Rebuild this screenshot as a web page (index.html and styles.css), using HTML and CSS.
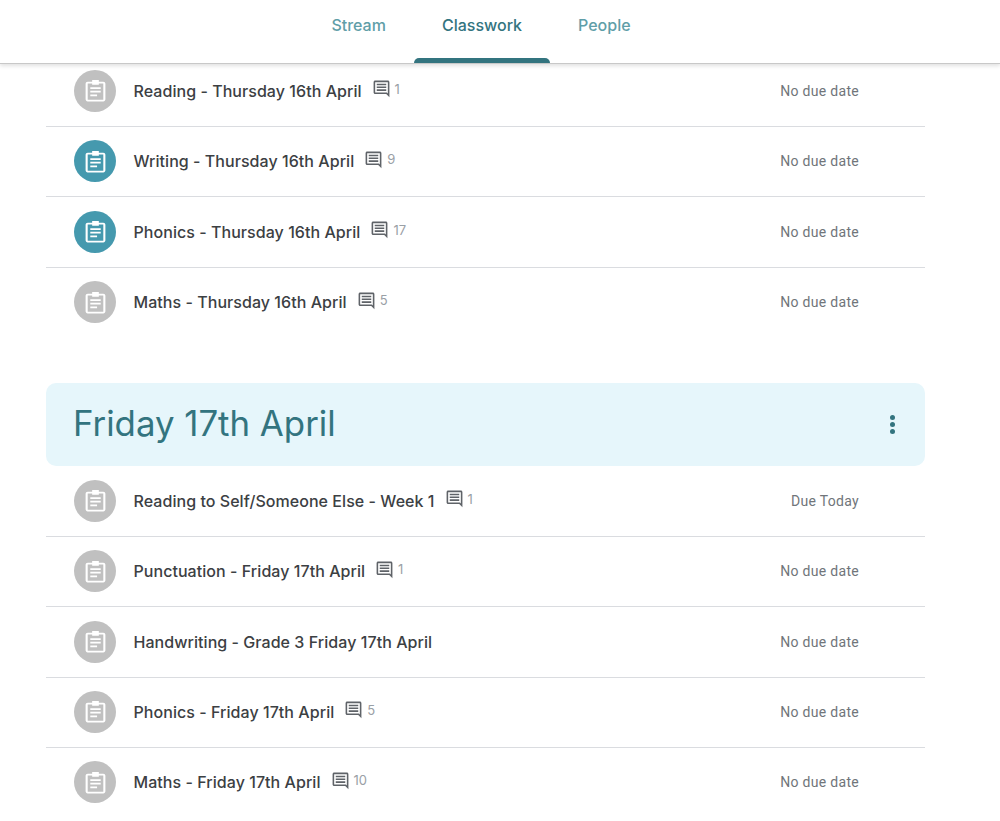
FILE: index.html
```html
<!DOCTYPE html>
<html lang="en">
<head>
  <meta charset="UTF-8">
  <meta name="viewport" content="width=device-width, initial-scale=1.0">
  <title>Classwork</title>
  <link rel="stylesheet" href="styles.css">
</head>
<body>

  <svg class="defs" width="0" height="0">
    <symbol id="assignment" viewBox="0 0 24 24">
      <path fill-rule="evenodd" d="M4.500 3.500h4.300V2h6.400v1.500h4.300c1.100 0 2 .9 2 2V20.500c0 1.100-.9 2-2 2H4.500c-1.100 0-2-.9-2-2V5.500c0-1.100.9-2 2-2zM4.500 5.200V20.800h15V5.200h-4.300V6.500H8.800V5.200zM7 8.800h10v1.700H7zM7 12.300h10v1.700H7zM7 15.800h6.500v1.700H7z"/>
    </symbol>
    <symbol id="comment" viewBox="0 0 24 24">
      <path d="M20 2H4c-1.100 0-2 .9-2 2v13c0 1.100.9 2 2 2h14l4 4V4c0-1.100-.9-2-2-2zm0 16.200L18.800 17H4V4h16v14.200zM6 6h12v2H6zM6 9.500h12v2H6zM6 13h12v2H6z"/>
    </symbol>
  </svg>

  <header class="topbar">
    <nav class="tabs">
      <a class="tab">Stream</a>
      <a class="tab active">Classwork</a>
      <a class="tab">People</a>
    </nav>
  </header>

  <main class="content">
    <ul class="list">
      <li class="row">
        <span class="badge"><svg><use href="#assignment"/></svg></span>
        <span class="title">Reading - Thursday 16th April</span>
        <span class="comments"><svg><use href="#comment"/></svg>1</span>
        <span class="due">No due date</span>
      </li>
      <li class="row">
        <span class="badge teal"><svg><use href="#assignment"/></svg></span>
        <span class="title">Writing - Thursday 16th April</span>
        <span class="comments"><svg><use href="#comment"/></svg>9</span>
        <span class="due">No due date</span>
      </li>
      <li class="row">
        <span class="badge teal"><svg><use href="#assignment"/></svg></span>
        <span class="title">Phonics - Thursday 16th April</span>
        <span class="comments"><svg><use href="#comment"/></svg>17</span>
        <span class="due">No due date</span>
      </li>
      <li class="row">
        <span class="badge"><svg><use href="#assignment"/></svg></span>
        <span class="title">Maths - Thursday 16th April</span>
        <span class="comments"><svg><use href="#comment"/></svg>5</span>
        <span class="due">No due date</span>
      </li>
    </ul>

    <section class="day">
      <h2>Friday 17th April</h2>
      <span class="more"><i></i><i></i><i></i></span>
    </section>

    <ul class="list">
      <li class="row">
        <span class="badge"><svg><use href="#assignment"/></svg></span>
        <span class="title">Reading to Self/Someone Else - Week 1</span>
        <span class="comments"><svg><use href="#comment"/></svg>1</span>
        <span class="due">Due Today</span>
      </li>
      <li class="row">
        <span class="badge"><svg><use href="#assignment"/></svg></span>
        <span class="title">Punctuation - Friday 17th April</span>
        <span class="comments"><svg><use href="#comment"/></svg>1</span>
        <span class="due">No due date</span>
      </li>
      <li class="row">
        <span class="badge"><svg><use href="#assignment"/></svg></span>
        <span class="title">Handwriting - Grade 3 Friday 17th April</span>
        <span class="due">No due date</span>
      </li>
      <li class="row">
        <span class="badge"><svg><use href="#assignment"/></svg></span>
        <span class="title">Phonics - Friday 17th April</span>
        <span class="comments"><svg><use href="#comment"/></svg>5</span>
        <span class="due">No due date</span>
      </li>
      <li class="row">
        <span class="badge"><svg><use href="#assignment"/></svg></span>
        <span class="title">Maths - Friday 17th April</span>
        <span class="comments"><svg><use href="#comment"/></svg>10</span>
        <span class="due">No due date</span>
      </li>
    </ul>
  </main>

</body>
</html>
```

FILE: styles.css
```css
html, body {
  height: 821px;
  overflow: hidden;
}

body {
  margin: 0;
  background-color: #fff;
  font-family: Inter, Arial, sans-serif;
  color: #3c4043;
}

.defs {
  display: block;
  height: 0;
}

.topbar {
  position: relative;
  z-index: 2;
  height: 64px;
  background-color: #fff;
  border-bottom: 1px solid #c8c8c8;
  box-shadow: 0 2px 4px rgba(0, 0, 0, 0.12);
  box-sizing: border-box;
}

.tabs {
  display: flex;
  justify-content: center;
  height: 100%;
  padding-right: 38px;
}

.tab {
  position: relative;
  padding: 14px 28px 0;
  font-size: 16px;
  font-weight: 500;
  line-height: 22px;
  color: #5f9ea8;
}

.tab.active {
  color: #33747f;
}

.tab.active::after {
  content: "";
  position: absolute;
  left: 0;
  right: 0;
  bottom: 0;
  height: 5px;
  background-color: #33747f;
  border-radius: 5px 5px 0 0;
}

.content {
  margin: -7.500px 75px 0 46px;
}

.list {
  list-style: none;
  margin: 0;
  padding: 0;
}

.row {
  display: flex;
  align-items: center;
  height: 70.400px;
  box-sizing: border-box;
  padding: 0 66px 0.6px 28px;
  border-bottom: 1px solid #dadce0;
}

.row:last-child {
  border-bottom: none;
  padding-bottom: 1.600px;
}

.badge {
  display: flex;
  align-items: center;
  justify-content: center;
  flex: none;
  width: 42px;
  height: 42px;
  border-radius: 50%;
  background-color: #c0c0c0;
  margin-right: 17.500px;
}

.badge.teal {
  background-color: #4599ae;
}

.badge svg {
  width: 25px;
  height: 25px;
  fill: #fff;
}

.title {
  font-size: 16px;
  font-weight: 500;
  letter-spacing: 0.05px;
  color: #3c4043;
}

.comments {
  display: flex;
  align-items: center;
  margin: -4px 0 0 10px;
  font-size: 13px;
  color: #9aa0a6;
}

.comments svg {
  width: 19px;
  height: 19px;
  margin-right: 4px;
  fill: #5f6368;
}

.due {
  margin-left: auto;
  font-family: Roboto, Arial, sans-serif;
  font-size: 14px;
  letter-spacing: 0.3px;
  color: #70757a;
}

.day {
  display: flex;
  align-items: center;
  justify-content: space-between;
  height: 83.400px;
  margin-top: 44.900px;
  padding: 0 28px;
  background-color: #e6f6fb;
  border-radius: 10px;
}

.day h2 {
  margin: 0 0 3px -1px;
  font-size: 34.800px;
  font-weight: 400;
  color: #33747f;
}

.more {
  display: flex;
  flex-direction: column;
  gap: 2px;
  margin: 0 2px 0 0;
}

.more i {
  display: block;
  width: 5px;
  height: 5px;
  border-radius: 50%;
  background-color: #33747f;
}
```
